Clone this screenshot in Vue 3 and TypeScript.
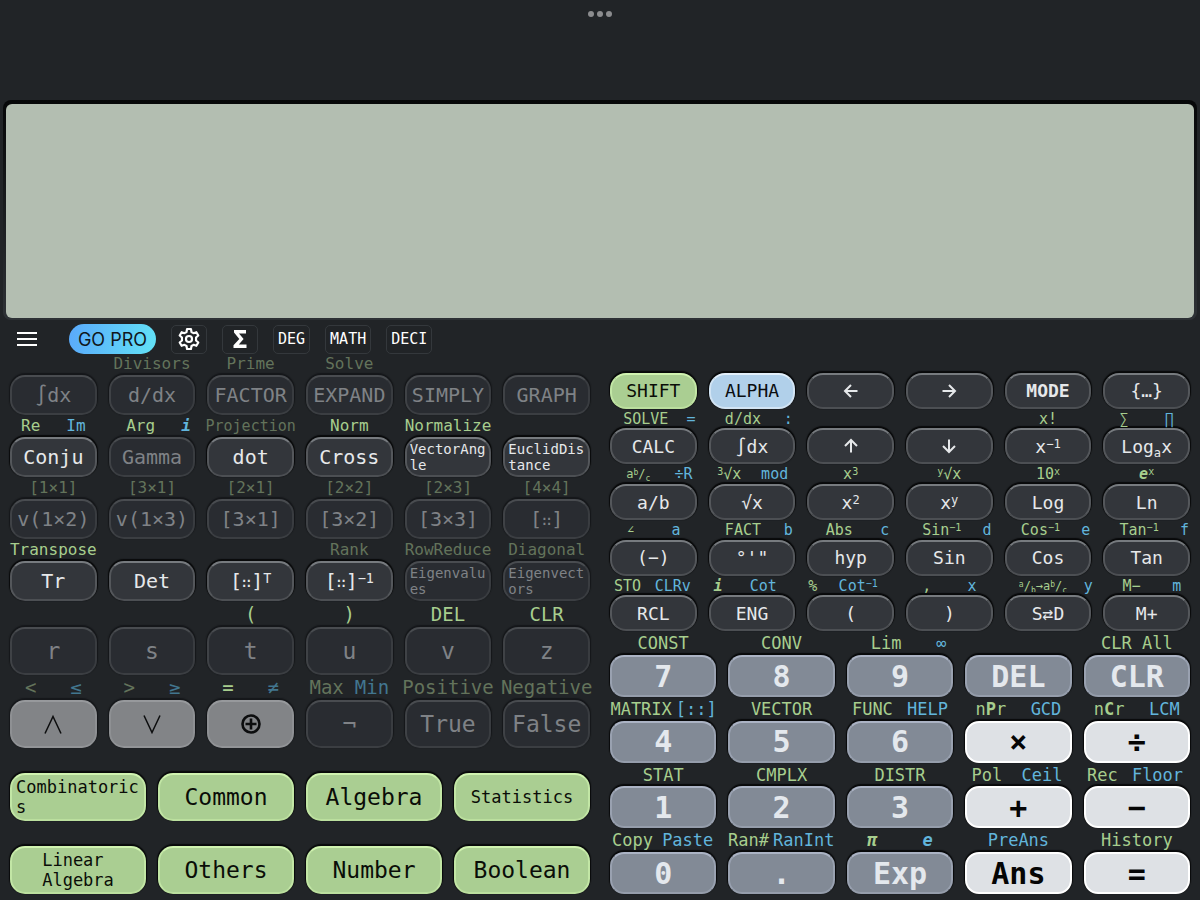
<script setup lang="ts">
type Mark = '^' | '_' | 'i' | 'b' | 's' | ''
interface Part { mark: Mark; text: string }
interface Label { text: string; tone: 'shift' | 'alpha'; dim?: boolean; small?: boolean; clip?: boolean }
interface Key { text: string; kind: string; labels: Label[]; icon?: string; size?: string }
interface Row { size: string; cols: number; keys: Key[] }

// Inline marks: {^:sup} {_:sub} {i:bold italic} {b:bold} {s:small low}
function parts(source: string): Part[] {
  const out: Part[] = []
  const re = /\{([\^_ibs]):(.+?)\}/g
  let last = 0
  let m: RegExpExecArray | null
  while ((m = re.exec(source))) {
    if (m.index > last) out.push({ mark: '', text: source.slice(last, m.index) })
    out.push({ mark: m[1] as Mark, text: m[2] })
    last = m.index + m[0].length
  }
  if (last < source.length) out.push({ mark: '', text: source.slice(last) })
  return out
}

function weight(label: Label): number {
  return parts(label.text).reduce((n, p) => n + p.text.length, 0)
}

function columns(labels: Label[]): Record<string, string> {
  return { gridTemplateColumns: labels.map((l) => `minmax(0, ${weight(l)}fr)`).join(' ') }
}

const g = (text: string, extra: Partial<Label> = {}): Label => ({ text, tone: 'shift', ...extra })
const a = (text: string, extra: Partial<Label> = {}): Label => ({ text, tone: 'alpha', ...extra })
const dim = { dim: true }
const k = (text: string, kind: string, labels: Label[] = [], extra: Partial<Key> = {}): Key => ({ text, kind, labels, ...extra })
const fine = { size: 'fine' }

const leftRows: Row[] = [
  { size: 'mid', cols: 6, keys: [
    k('∫dx', 'off'), k('d/dx', 'off', [g('Divisors', dim)]), k('FACTOR', 'off', [g('Prime', dim)]),
    k('EXPAND', 'off', [g('Solve', dim)]), k('SIMPLY', 'off'), k('GRAPH', 'off'),
  ] },
  { size: 'mid', cols: 6, keys: [
    k('Conju', 'dark', [g('Re'), a('Im')]), k('Gamma', 'off', [g('Arg'), a('{i:i}')]),
    k('dot', 'dark', [g('Projection', { dim: true, small: true })]), k('Cross', 'dark', [g('Norm')]),
    k('VectorAngle', 'dark', [g('Normalize')], fine), k('EuclidDistance', 'dark', [], fine),
  ] },
  { size: 'mid', cols: 6, keys: [
    k('v(1×2)', 'off', [g('[1×1]', dim)]), k('v(1×3)', 'off', [g('[3×1]', dim)]), k('[3×1]', 'off', [g('[2×1]', dim)]),
    k('[3×2]', 'off', [g('[2×2]', dim)]), k('[3×3]', 'off', [g('[2×3]', dim)]), k('[{s:∷}]', 'off', [g('[4×4]', dim)]),
  ] },
  { size: 'mid', cols: 6, keys: [
    k('Tr', 'dark', [g('Transpose')]), k('Det', 'dark'), k('[{s:∷}]{^:T}', 'dark'),
    k('[{s:∷}]{^:−1}', 'dark', [g('Rank', dim)]), k('Eigenvalues', 'off', [g('RowReduce', dim)], fine),
    k('Eigenvectors', 'off', [g('Diagonal', dim)], fine),
  ] },
  { size: 'tall', cols: 6, keys: [
    k('r', 'off'), k('s', 'off'), k('t', 'off', [g('(')]), k('u', 'off', [g(')')]),
    k('v', 'off', [g('DEL')]), k('z', 'off', [g('CLR')]),
  ] },
  { size: 'tall', cols: 6, keys: [
    k('And', 'mute', [g('<', dim), a('≤', dim)], { icon: 'and' }), k('Or', 'mute', [g('>', dim), a('≥', dim)], { icon: 'or' }),
    k('Xor', 'mute', [g('='), a('≠', dim)], { icon: 'xor' }), k('¬', 'off', [g('Max', dim), a('Min', dim)]),
    k('True', 'off', [g('Positive', dim)]), k('False', 'off', [g('Negative', dim)]),
  ] },
  { size: 'tall', cols: 4, keys: [
    k('Combinatorics', 'green', [], { size: 'note' }), k('Common', 'green'), k('Algebra', 'green'),
    k('Statistics', 'green', [], { size: 'note' }),
  ] },
  { size: 'tall', cols: 4, keys: [
    k('Linear\nAlgebra', 'green', [], { size: 'note' }), k('Others', 'green'), k('Number', 'green'), k('Boolean', 'green'),
  ] },
]

const rightRows: Row[] = [
  { size: 'low', cols: 6, keys: [
    k('SHIFT', 'green'), k('ALPHA', 'blue'), k('Left', 'dark', [], { icon: 'left' }), k('Right', 'dark', [], { icon: 'right' }),
    k('{b:MODE}', 'dark'), k('{…}', 'dark'),
  ] },
  { size: 'low', cols: 6, keys: [
    k('CALC', 'dark', [g('SOLVE'), a('=')]), k('∫dx', 'dark', [g('d/dx'), a(':')]), k('Up', 'dark', [], { icon: 'up' }),
    k('Down', 'dark', [], { icon: 'down' }), k('x{^:−1}', 'dark', [g('x!')]), k('Log{_:a}x', 'dark', [g('∑'), a('∏')]),
  ] },
  { size: 'low', cols: 6, keys: [
    k('a/b', 'dark', [g('a{^:b}/{_:c}', { small: true }), a('÷R')]), k('√x', 'dark', [g('{^:3}√x'), a('mod')]),
    k('x{^:2}', 'dark', [g('x{^:3}')]), k('x{^:y}', 'dark', [g('{^:y}√x')]), k('Log', 'dark', [g('10{^:x}')]),
    k('Ln', 'dark', [g('{i:e}{^:x}')]),
  ] },
  { size: 'low', cols: 6, keys: [
    k('(−)', 'dark', [g('∠', { small: true }), a('a')]), k('°\'"', 'dark', [g('FACT'), a('b')]), k('hyp', 'dark', [g('Abs'), a('c')]),
    k('Sin', 'dark', [g('Sin{^:−1}'), a('d')]), k('Cos', 'dark', [g('Cos{^:−1}'), a('e')]), k('Tan', 'dark', [g('Tan{^:−1}'), a('f')]),
  ] },
  { size: 'low', cols: 6, keys: [
    k('RCL', 'dark', [g('STO'), a('CLRv')]), k('ENG', 'dark', [g('{i:i}'), a('Cot')]), k('(', 'dark', [g('%'), a('Cot{^:−1}')]),
    k(')', 'dark', [g(','), a('x')]),
    k('S⇄D', 'dark', [g('{^:a}/{_:b}→a{^:b}/{_:c}', { small: true, clip: true }), a('y')]), k('M+', 'dark', [g('M−'), a('m')]),
  ] },
  { size: 'num', cols: 5, keys: [
    k('7', 'steel', [g('CONST')]), k('8', 'steel', [g('CONV')]), k('9', 'steel', [g('Lim'), a('∞')]),
    k('DEL', 'steel'), k('CLR', 'steel', [g('CLR All')]),
  ] },
  { size: 'num', cols: 5, keys: [
    k('4', 'steel', [g('MATRIX'), a('[::]')]), k('5', 'steel', [g('VECTOR')]), k('6', 'steel', [g('FUNC'), a('HELP')]),
    k('×', 'white', [g('n{b:P}r'), a('GCD')]), k('÷', 'white', [g('n{b:C}r'), a('LCM')]),
  ] },
  { size: 'num', cols: 5, keys: [
    k('1', 'steel', [g('STAT')]), k('2', 'steel', [g('CMPLX')]), k('3', 'steel', [g('DISTR')]),
    k('+', 'white', [g('Pol'), a('Ceil')]), k('−', 'white', [g('Rec'), a('Floor')]),
  ] },
  { size: 'num', cols: 5, keys: [
    k('0', 'steel', [g('Copy'), a('Paste')]), k('.', 'steel', [g('Ran#'), a('RanInt')]), k('Exp', 'steel', [g('{i:π}'), a('{i:e}')]),
    k('Ans', 'white', [a('PreAns')]), k('=', 'white', [g('History')]),
  ] },
]

const panels = [{ name: 'functions', rows: leftRows }, { name: 'keypad', rows: rightRows }]

const markClass: Record<Mark, string> = { '^': 'sup', _: 'sub', i: 'ital', b: 'bold', s: 'tiny', '': '' }

const iconPaths: Record<string, string> = {
  left: 'M16.500 10H4M10 4L4 10L10 16',
  right: 'M3.500 10H16M10 4L16 10L10 16',
  up: 'M10 16.500V4M4 10L10 4L16 10',
  down: 'M10 3.500V16M4 10L10 16L16 10',
  and: 'M2 19.500L10 2.500L18 19.500',
  or: 'M2 1.500L10 18.500L18 1.500',
  xor: 'M10 4.500V15.500M4.500 10H15.500M10 1.500A8.500 8.500 0 1 0 10 18.500A8.500 8.500 0 1 0 10 1.500Z',
}
const modes = ['DEG', 'MATH', 'DECI']
</script>

<template>
  <main class="calc">
    <header class="top">
      <button class="more" aria-label="Window options"><i></i><i></i><i></i></button>
    </header>
    <section class="display" aria-label="Display"><div class="screen"></div></section>
    <nav class="bar">
      <button class="menu" aria-label="Menu"><i></i><i></i><i></i></button>
      <button class="pro">GO PRO</button>
      <button class="tool icon-tool" aria-label="Settings">
        <svg viewBox="0 0 24 24" width="26" height="26" fill="none" stroke="currentColor" stroke-width="2" stroke-linejoin="round">
          <path d="M10.200 2.800h3.600l.5 2.700 1.900 1.100 2.600-.9 1.800 3.100-2.100 1.800v2.800l2.100 1.800-1.800 3.100-2.600-.9-1.900 1.100-.5 2.700h-3.600l-.5-2.700-1.900-1.100-2.600.9-1.800-3.100 2.100-1.800v-2.800l-2.100-1.800 1.800-3.100 2.600.9 1.900-1.100z" />
          <circle cx="12" cy="12" r="2.800" />
        </svg>
      </button>
      <button class="tool icon-tool" aria-label="Sum">
        <svg viewBox="0 0 24 24" width="24" height="24" fill="currentColor">
          <path d="M18 3H6v2.600L11.300 12 5.500 18.200V21h13v-3.600H10.800L15.600 12 11 6.400h7z" />
        </svg>
      </button>
      <button v-for="m in modes" :key="m" class="tool">{{ m }}</button>
    </nav>
    <div class="keys">
      <section v-for="panel in panels" :key="panel.name" class="panel" :class="panel.name">
        <div v-for="(row, r) in panel.rows" :key="r" class="row" :class="[row.size, 'cols-' + row.cols]">
          <div v-for="(key, c) in row.keys" :key="c" class="cell">
            <div class="labels" :style="columns(key.labels)">
              <span v-for="(label, n) in key.labels" :key="n" class="label" :class="[label.tone, { dim: label.dim, small: label.small, clip: label.clip }]">
                <span class="label-text"><span v-for="(p, i) in parts(label.text)" :key="i" :class="markClass[p.mark]">{{ p.text }}</span></span>
              </span>
            </div>
            <button class="key" :class="[key.kind, key.size]" :aria-label="key.icon ? key.text : undefined">
              <svg v-if="key.icon" :class="'glyph ' + key.icon" viewBox="0 0 20 20" width="20" height="20" fill="none" stroke="currentColor">
                <path :d="iconPaths[key.icon]" />
              </svg>
              <span v-else class="key-text"><span v-for="(p, i) in parts(key.text)" :key="i" :class="markClass[p.mark]">{{ p.text }}</span></span>
            </button>
          </div>
        </div>
      </section>
    </div>
  </main>
</template>

<style>
body {
  margin: 0;
  background: #212427;
}
</style>

<style scoped>
.calc {
  display: flex;
  flex-direction: column;
  min-height: 100vh;
  box-sizing: border-box;
  padding-bottom: 6px;
  background: #212427;
  color: #e6e8ea;
  font-family: "DejaVu Sans Mono", monospace;
}
button {
  margin: 0;
  padding: 0;
  border: 0;
  background: none;
  color: inherit;
  font: inherit;
}
.top {
  height: 100px;
  display: flex;
  justify-content: center;
  align-items: flex-start;
}
.more {
  display: flex;
  gap: 3px;
  padding: 11px 4px;
}
.more i {
  width: 6px;
  height: 6px;
  border-radius: 3px;
  background: #8b8c8e;
}
.display {
  height: 214px;
  margin: 0 3px;
  padding: 4px 3px 2px;
  border-radius: 8px;
  background: linear-gradient(#060708, #2e3236);
}
.screen {
  height: 100%;
  border-radius: 6px;
  background: #b3beb1;
}
.bar {
  display: flex;
  align-items: center;
  height: 30px;
  margin-bottom: -1px;
  padding: 4px 17px 0;
  gap: 15px;
  font-size: 15px;
}
.menu {
  display: flex;
  flex-direction: column;
  gap: 4px;
  width: 20px;
  margin-right: 17px;
}
.menu i {
  height: 2px;
  background: #fff;
}
.pro {
  width: 87px;
  height: 30px;
  border-radius: 15px;
  background: linear-gradient(100deg, #5aa9fb, #62e2f6);
  color: #10161c;
  font-family: Inter, "Liberation Sans", sans-serif;
  font-size: 18px;
}
.tool {
  display: flex;
  align-items: center;
  justify-content: center;
  height: 29px;
  box-sizing: border-box;
  padding: 0 4px;
  border: 1px solid #34383c;
  border-radius: 5px;
  color: #fff;
}
.icon-tool {
  width: 36px;
}
.icon-tool svg {
  flex: none;
}
.keys {
  flex: 1;
  display: grid;
  grid-template-columns: 1fr 1fr;
}
.panel {
  display: grid;
  padding: 0 10px;
}
.functions {
  grid-template-rows: repeat(4, 62fr) repeat(4, 73fr);
}
.keypad {
  grid-template-rows: repeat(5, 56fr) repeat(4, 66fr);
}
.row {
  display: grid;
  gap: 12px;
}
.cols-6 {
  grid-template-columns: repeat(6, minmax(0, 1fr));
}
.cols-5 {
  grid-template-columns: repeat(5, minmax(0, 1fr));
}
.cols-4 {
  grid-template-columns: repeat(4, minmax(0, 1fr));
}
.cell {
  display: flex;
  flex-direction: column;
}
.labels {
  position: relative;
  z-index: 1;
  flex: 1;
  display: grid;
  align-items: center;
  margin: 0 -2px;
}
.label {
  display: flex;
  justify-content: center;
  line-height: 18px;
  white-space: nowrap;
}
.shift {
  color: #a7ce8e;
}
.alpha {
  color: #62b5dc;
}
.shift.dim {
  color: #63735b;
}
.alpha.dim {
  color: #42768f;
}
.key {
  display: flex;
  align-items: center;
  justify-content: center;
  box-sizing: border-box;
  padding: 0 3px;
  border: 2px solid;
  box-shadow: 0 -1px 1px 1px #08090a;
}
.key-text {
  text-align: left;
  white-space: pre-line;
  word-break: break-all;
}
.mid .key {
  height: 40px;
  border-radius: 15px;
  font-size: 20px;
}
.mid .label {
  font-size: 16px;
}
.mid .small {
  font-size: 15px;
}
.mid .fine {
  font-size: 14px;
  line-height: 16px;
}
.tall .key {
  height: 48px;
  border-radius: 15px;
  font-size: 23px;
}
.tall .label {
  font-size: 19px;
}
.tall .note {
  padding: 0 4px;
  font-size: 17px;
  line-height: 20px;
}
.low .key {
  height: 36px;
  border-radius: 16px;
  font-size: 18px;
}
.low .label {
  font-size: 15px;
}
.low .small {
  font-size: 12px;
}
.num .key {
  height: 42px;
  border-radius: 14px;
  font-size: 30px;
  font-weight: bold;
}
.num .label {
  font-size: 17px;
}
.off {
  background: #292c31;
  border-color: #494c50 #393c40 #3b3e42 #3f4246;
  color: #7f8286;
  box-shadow: 0 -1px 1px 1px #15171a;
}
.dark {
  background: #33363b;
  border-color: #777b7f #54575b #4c4f53 #54575b;
}
.green {
  background: #aace92;
  border-color: #d0f3b0 #c2e6a5 #bbdf9e #c2e6a5;
  color: #0a0d08;
}
.blue {
  background: #b1d0ea;
  border-color: #e2effa #d2e4f4 #d2e4f4 #d2e4f4;
  color: #0a0d10;
}
.steel {
  background: #828a96;
  border-color: #abb3c4 #99a1b0 #959dab #99a1b0;
  color: #e4e8ed;
}
.white {
  background: #dee1e5;
  border-color: #fff;
  color: #050505;
}
.mute {
  background: #828487;
  border-color: #97999c #8e9093 #929497 #8e9093;
  color: #0c0d0e;
  box-shadow: 0 -1px 1px 1px #15171a;
}
.glyph {
  stroke-width: 2;
}
.and,
.or {
  stroke-width: 1.500;
}
.xor {
  stroke-width: 2.600;
}
.sup,
.sub,
.tiny {
  font-size: 67%;
  line-height: 0;
}
.sup {
  vertical-align: 0.4em;
}
.sub {
  vertical-align: -0.33em;
}
.tiny {
  font-size: 75%;
}
.ital {
  font-weight: bold;
  font-style: italic;
}
.bold {
  font-weight: bold;
}
.clip .label-text {
  height: 13px;
  line-height: 15px;
  overflow: hidden;
}
</style>
